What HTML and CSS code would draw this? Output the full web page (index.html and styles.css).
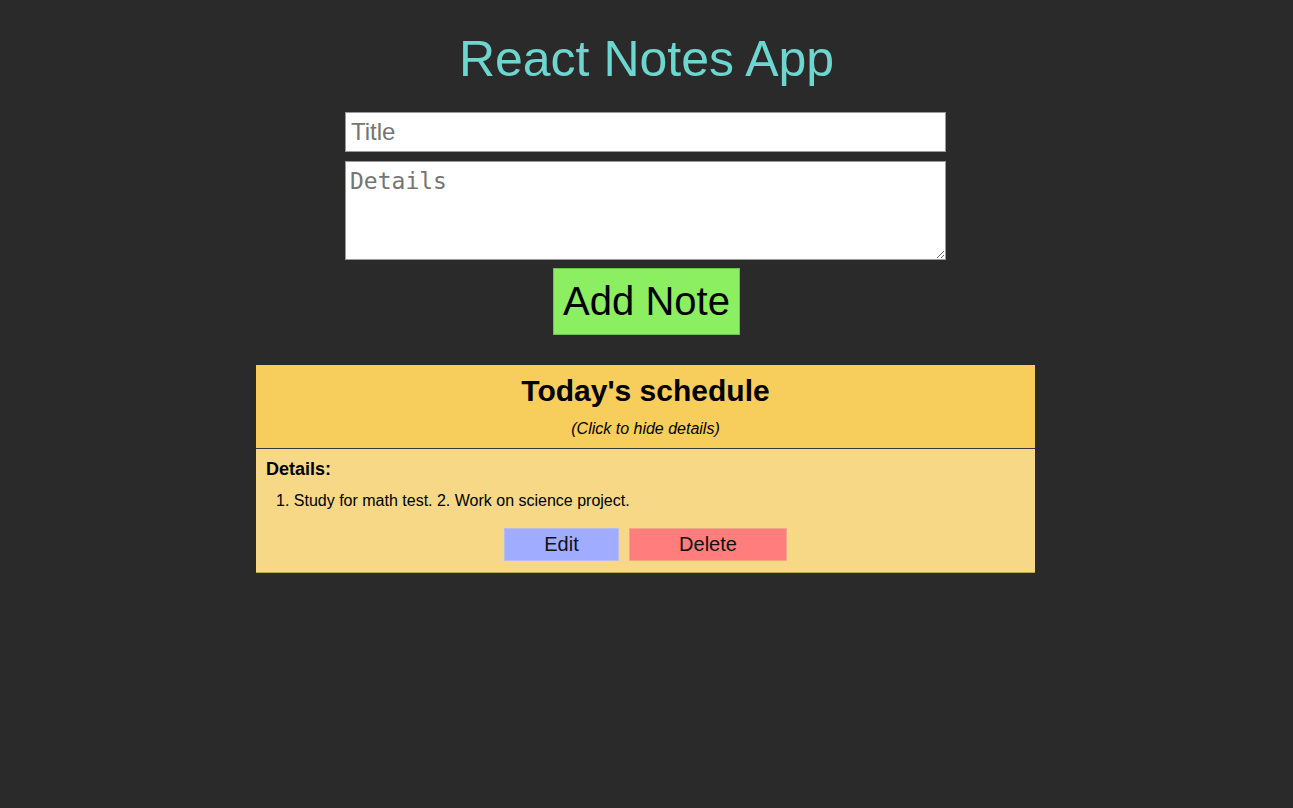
FILE: index.html
```html
<!DOCTYPE html>
<html lang="en">
<head>
<meta charset="utf-8">
<title>React Notes App</title>
<link rel="stylesheet" href="styles.css">
</head>
<body>
<div class="app">
  <h1 class="app-title">React Notes App</h1>
  <form class="note-form">
    <input class="title-input" type="text" placeholder="Title">
    <textarea class="details-input" placeholder="Details"></textarea>
    <button class="add-btn" type="button">Add Note</button>
  </form>
  <div class="note">
    <div class="note-head">
      <h2 class="note-title">Today's schedule</h2>
      <p class="note-hint">(Click to hide details)</p>
    </div>
    <div class="note-body">
      <h3 class="note-label">Details:</h3>
      <p class="note-text">1. Study for math test. 2. Work on science project.</p>
      <div class="note-actions">
        <button class="edit-btn" type="button">Edit</button>
        <button class="delete-btn" type="button">Delete</button>
      </div>
    </div>
  </div>
</div>
</body>
</html>
```

FILE: styles.css
```css
html, body {
  margin: 0;
  padding: 0;
  background: #2a2a2a;
}
body {
  font-family: "Liberation Sans", Arial, sans-serif;
}
.app {
  display: flex;
  flex-direction: column;
  align-items: center;
  padding-top: 31px;
}
.app-title {
  margin: 0;
  font-size: 50px;
  font-weight: normal;
  color: #6dd6cf;
  line-height: 57px;
}
.note-form {
  display: flex;
  flex-direction: column;
  align-items: center;
  margin-top: 24px;
}
.title-input {
  box-sizing: border-box;
  width: 601px;
  height: 40px;
  margin: 0 2px 0 0;
  padding: 2px 5px;
  border: 1px solid #9a9a9a;
  font-family: "Liberation Sans", Arial, sans-serif;
  font-size: 24px;
  background: #fff;
  outline: none;
}
.title-input::placeholder { color: #757575; }
.details-input {
  box-sizing: border-box;
  width: 601px;
  height: 99px;
  margin: 9px 2px 0 0;
  padding: 6px 4px 4px;
  border: 1px solid #9a9a9a;
  font-family: "DejaVu Sans Mono", "Liberation Mono", monospace;
  font-size: 23px;
  background: #fff;
  outline: none;
}
.details-input::placeholder { color: #757575; }
.add-btn {
  box-sizing: border-box;
  margin-top: 8px;
  width: 187px;
  height: 67px;
  padding: 0;
  border: 1px solid #6fc24d;
  background: #8cef62;
  color: #000;
  font-family: "Liberation Sans", Arial, sans-serif;
  font-size: 40px;
}
.note {
  box-sizing: border-box;
  width: 779px;
  margin: 30px 2px 0 0;
  border-bottom: 1px solid #bfa25a;
}
.note-head {
  background: #f7cd5b;
  text-align: center;
  padding: 9px 0 10px;
  border-bottom: 1px solid #3a3a3a;
}
.note-title {
  margin: 0;
  font-size: 30px;
  font-weight: bold;
  line-height: 34px;
  color: #000;
}
.note-hint {
  margin: 12px 0 0;
  font-size: 16px;
  font-style: italic;
  line-height: 18px;
  color: #000;
}
.note-body {
  background: #f6d887;
  padding: 10px 10px 11px;
}
.note-label {
  margin: 0;
  font-size: 18px;
  font-weight: bold;
  line-height: 21px;
  color: #000;
}
.note-text {
  margin: 12px 0 0;
  padding-left: 10px;
  font-size: 16px;
  line-height: 18px;
  color: #000;
}
.note-actions {
  display: flex;
  justify-content: center;
  gap: 10px;
  margin-top: 18px;
}
.edit-btn, .delete-btn {
  box-sizing: border-box;
  height: 33px;
  padding: 0;
  font-family: "Liberation Sans", Arial, sans-serif;
  font-size: 20px;
  color: #111;
}
.edit-btn {
  width: 115px;
  background: #a0acff;
  border: 1px solid #b7bde6;
}
.delete-btn {
  width: 158px;
  background: #ff7d7d;
  border: 1px solid #f4a585;
}
```
